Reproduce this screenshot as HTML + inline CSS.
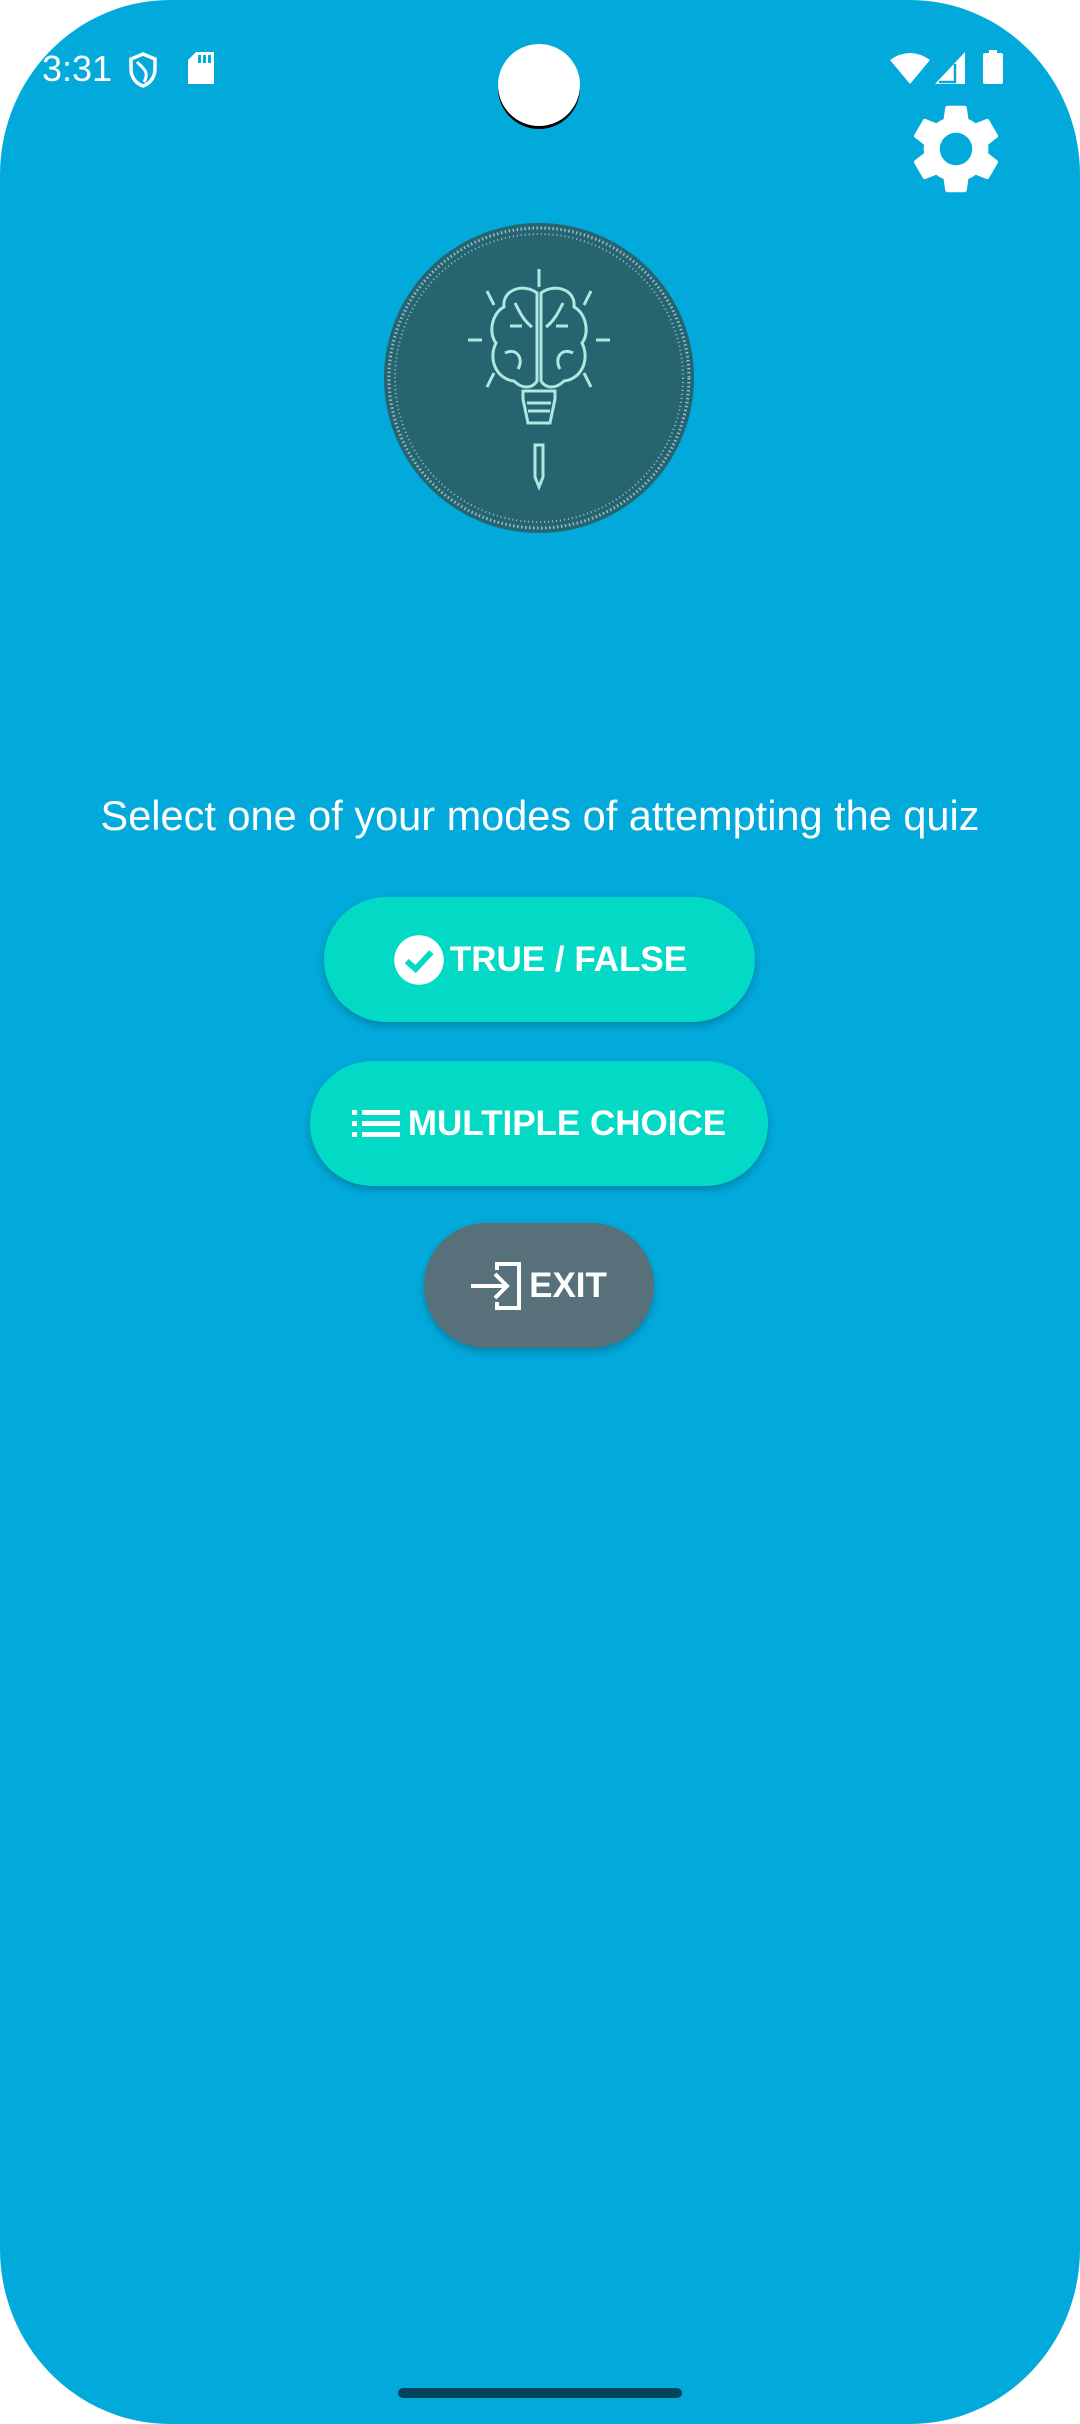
<!DOCTYPE html>
<html><head><meta charset="utf-8"><style>
html,body{margin:0;padding:0;background:#fff;}
body{width:1080px;height:2424px;position:relative;overflow:hidden;font-family:"Liberation Sans",sans-serif;}
.scr{position:absolute;left:0;top:0;width:1080px;height:2424px;background:#02a9db;border-radius:170px/175px;overflow:hidden;}
.t{position:absolute;color:#fff;}
.btn{position:absolute;border-radius:64px;color:#fff;font-weight:bold;font-size:35px;display:flex;align-items:center;justify-content:center;box-shadow:0 4px 8px rgba(0,0,0,0.22);}
</style></head><body>
<div class="scr">
<div class="t" style="left:42px;top:48px;font-size:36px;">3:31</div>
<svg style="position:absolute;left:128px;top:52px" width="30" height="36" viewBox="0 0 30 36"><path d="M15 2 L27 7 V17 C27 26 21 32 15 34 C9 32 3 26 3 17 V7 Z" fill="none" stroke="#fff" stroke-width="3.5"/><path d="M9 10 C15 16 22 20 16 30" fill="none" stroke="#fff" stroke-width="3"/></svg>
<svg style="position:absolute;left:188px;top:52px" width="26" height="32" viewBox="0 0 26 32"><path d="M8 0 H26 V32 H0 V8 Z" fill="#fff"/><rect x="10" y="3" width="3" height="8" fill="#02a9db"/><rect x="15" y="3" width="3" height="8" fill="#02a9db"/><rect x="20" y="3" width="3" height="8" fill="#02a9db"/></svg>
<div style="position:absolute;left:498px;top:44px;width:82px;height:82px;border-radius:50%;background:#fff;box-shadow:0 3px 0 #000;"></div>
<svg style="position:absolute;left:890px;top:52px" width="40" height="32" viewBox="0 0 40 32"><path d="M0 8 Q20 -6 40 8 L20 32 Z" fill="#fff"/></svg>
<svg style="position:absolute;left:935px;top:52px" width="32" height="32" viewBox="0 0 32 32"><path d="M30 0 V32 H0 Z" fill="#fff"/><path d="M20 12 V30 H4" fill="none" stroke="#02a9db" stroke-width="2.5"/></svg>
<svg style="position:absolute;left:983px;top:50px" width="20" height="34" viewBox="0 0 20 34"><rect x="6" y="0" width="8" height="4" fill="#fff"/><rect x="0" y="3" width="20" height="31" rx="2" fill="#fff"/></svg>
<svg style="position:absolute;left:902px;top:95px" width="108" height="108" viewBox="0 0 24 24"><path fill="#fff" d="M19.14 12.94c.04-.3.06-.61.06-.94 0-.32-.02-.64-.07-.94l2.03-1.58a.49.49 0 0 0 .12-.61l-1.92-3.32a.49.49 0 0 0-.59-.22l-2.390.96c-.5-.38-1.03-.7-1.62-.94l-.36-2.54a.48.48 0 0 0-.48-.41h-3.84c-.24 0-.43.17-.47.41l-.36 2.54c-.59.24-1.13.57-1.62.94l-2.39-.96a.48.48 0 0 0-.59.22L2.74 8.87c-.12.21-.08.47.12.61l2.03 1.58c-.05.3-.09.63-.09.94s.2.64.07.94l-2.03 1.58a.49.49 0 0 0-.12.61l1.92 3.32c.12.22.37.29.59.22l2.39-.96c.5.38 1.03.7 1.62.94l.36 2.54c.05.24.24.41.48.41h3.84c.24 0 .44-.17.47-.41l.36-2.54c.59-.24 1.13-.56 1.620-.94l2.39.96c.22.08.47 0 .59-.22l1.92-3.32c.12-.22.07-.47-.12-.61l-2.01-1.58zM12 15.6A3.6 3.6 0 1 1 12 8.4a3.6 3.6 0 0 1 0 7.2z"/></svg>
<svg style="position:absolute;left:382px;top:221px" width="314" height="314" viewBox="0 0 314 314">
<circle cx="157" cy="157" r="155" fill="#26656f"/>
<circle cx="157" cy="157" r="150" fill="none" stroke="#9bc" stroke-width="3" stroke-dasharray="1.5 2.5"/>
<circle cx="157" cy="157" r="144" fill="none" stroke="#9bc" stroke-width="2" stroke-dasharray="1 3"/>
<g stroke="#aee8e0" stroke-width="3" fill="none">
<path d="M157 48 V66 M105 70 L112 84 M209 70 L202 84 M86 119 H100 M214 119 H228 M112 152 L105 166 M202 152 L209 166"/>
<path d="M155 72 C142 62 120 68 122 86 C110 92 106 112 114 122 C106 138 114 158 132 160 C140 168 150 168 155 160 Z"/>
<path d="M159 72 C172 62 194 68 192 86 C204 92 208 112 200 122 C208 138 200 158 182 160 C174 168 164 168 159 160 Z"/>
<path d="M133 82 C138 92 142 100 150 106 M123 132 C135 126 142 138 136 148 M181 82 C176 92 172 100 164 106 M191 132 C179 126 172 138 178 148 M128 105 H140 M174 105 H186"/>
<path d="M141 170 H173 V178 L168 202 H146 L141 178 Z M145 182 H169 M146 190 H168"/>
<path d="M153 224 H161 V256 L157 266 L153 256 Z"/>
</g></svg>
<div class="t" style="left:0;width:1080px;top:792px;text-align:center;font-size:41.5px;">Select one of your modes of attempting the quiz</div>
<div class="btn" style="left:324px;top:897px;width:431px;height:125px;background:#03dac6;">
<svg width="54" height="54" viewBox="0 0 24 24" style="margin-right:4px"><circle cx="12" cy="12" r="11" fill="#fff"/><path d="M6.5 12.5 L10.5 16 L17.5 8.5" fill="none" stroke="#03dac6" stroke-width="2.6"/></svg>TRUE / FALSE</div>
<div class="btn" style="left:310px;top:1061px;width:458px;height:125px;background:#03dac6;">
<svg width="50" height="30" viewBox="0 0 50 30" style="margin-right:6px"><g fill="#fff"><rect x="0" y="1" width="5" height="5"/><rect x="0" y="12" width="5" height="5"/><rect x="0" y="23" width="5" height="5"/><rect x="10" y="1" width="38" height="5"/><rect x="10" y="12" width="38" height="5"/><rect x="10" y="23" width="38" height="5"/></g></svg>MULTIPLE CHOICE</div>
<div class="btn" style="left:424px;top:1223px;width:230px;height:125px;background:#57707a;">
<svg width="52" height="48" viewBox="0 0 52 48" style="margin-right:6px"><g fill="none" stroke="#fff" stroke-width="4"><path d="M0 24 H36 M24 12 L36 24 L24 36"/><path d="M26 8 V2 H48 V46 H26 V40"/></g></svg>EXIT</div>
<div style="position:absolute;left:398px;top:2388px;width:284px;height:10px;border-radius:5px;background:#00455a;"></div>
</div>
</body></html>
